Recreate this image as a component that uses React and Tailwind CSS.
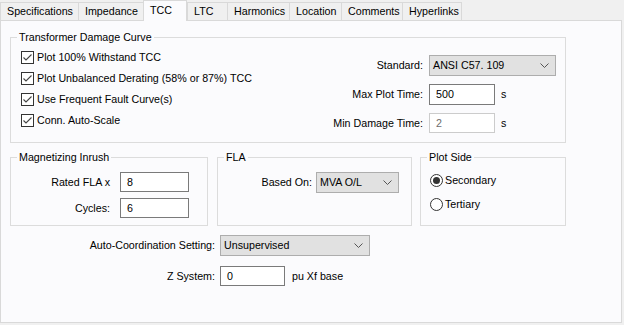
import React from "react";

const tabs = [
  { label: "Specifications", w: "w-[78px]" },
  { label: "Impedance", w: "w-[65px]" },
  { label: "TCC", w: "w-[44px]", active: true },
  { label: "LTC", w: "w-[40px]" },
  { label: "Harmonics", w: "w-[62px]" },
  { label: "Location", w: "w-[52px]" },
  { label: "Comments", w: "w-[61px]" },
  { label: "Hyperlinks", w: "w-[60px]", last: true },
];

const checks = [
  "Plot 100% Withstand TCC",
  "Plot Unbalanced Derating (58% or 87%) TCC",
  "Use Frequent Fault Curve(s)",
  "Conn. Auto-Scale",
];

function Checkbox() {
  return (
    <svg width="13" height="13" viewBox="0 0 13 13" className="shrink-0">
      <rect x="0.5" y="0.5" width="12" height="12" fill="#fff" stroke="#333" />
      <path d="M2.5 6.5 L5 9 L10.5 3.5" fill="none" stroke="#444" strokeWidth="1.1" />
    </svg>
  );
}

function Radio({ checked }) {
  return (
    <svg width="13" height="13" viewBox="0 0 13 13" className="shrink-0">
      <circle cx="6.5" cy="6.5" r="6" fill="#fff" stroke="#333" />
      {checked && <circle cx="6.5" cy="6.5" r="3.5" fill="#333" />}
    </svg>
  );
}

function Select({ value, w }) {
  return (
    <div className={`${w} h-[21px] flex items-center justify-between bg-[#e1e1e1] border border-[#adadad] pl-[3px] pr-[6px]`}>
      <span>{value}</span>
      <svg width="9" height="5" viewBox="0 0 9 5">
        <path d="M0.5 0.5 L4.5 4.5 L8.5 0.5" fill="none" stroke="#555" strokeWidth="1" />
      </svg>
    </div>
  );
}

function Input({ value, w, h = "h-[20px]", disabled }) {
  return (
    <div
      className={`${w} ${h} flex items-center pl-[6px] bg-white border ${
        disabled ? "border-[#cccccc] text-[#6d6d6d]" : "border-[#7a7a7a]"
      }`}
    >
      {value}
    </div>
  );
}

function GroupBox({ title, className, children }) {
  return (
    <fieldset className={`border border-[#dcdcdc] ${className}`}>
      <legend className="ml-[6px] px-[2px] leading-[13px]">{title}</legend>
      {children}
    </fieldset>
  );
}

export default function App() {
  return (
    <div className="w-[624px] h-[325px] bg-[#f0f0f0] font-['Liberation_Sans',Arial,sans-serif] text-[10.7px] leading-[13px] text-black whitespace-nowrap">
      <div className="flex items-end h-[20px]">
        {tabs.map((t) =>
          t.active ? (
            <div
              key={t.label}
              className={`${t.w} h-[21px] -mb-px relative z-10 bg-[#fbfbfd] border border-b-0 border-[#d9d9d9] pl-[6px] pt-[3px]`}
            >
              {t.label}
            </div>
          ) : (
            <div
              key={t.label}
              className={`${t.w} h-[18px] flex items-center pl-[6px] border-t border-l border-[#d9d9d9] ${t.last ? "border-r" : ""}`}
            >
              {t.label}
            </div>
          )
        )}
      </div>

      <div className="w-[622px] h-[303px] border border-[#d9d9d9] bg-[#fbfbfd] pt-[10px] pl-[9px]">
        <GroupBox title="Transformer Damage Curve" className="w-[556px] h-[112px]">
          <div className="flex justify-between pl-[10px] pr-[9px] pt-[3px]">
            <div className="flex flex-col">
              {checks.map((c) => (
                <div key={c} className="h-[21px] flex items-center gap-[3px]">
                  <Checkbox />
                  <span>{c}</span>
                </div>
              ))}
            </div>
            <div className="mt-[8px] grid grid-cols-[auto_auto] gap-x-[6px] gap-y-[8px] items-center self-start">
              <span className="text-right">Standard:</span>
              <Select value="ANSI C57. 109" w="w-[127px]" />
              <span className="text-right">Max Plot Time:</span>
              <div className="flex items-center">
                <Input value="500" w="w-[66px]" h="h-[21px]" />
                <span className="ml-[6px]">s</span>
              </div>
              <span className="text-right">Min Damage Time:</span>
              <div className="flex items-center">
                <Input value="2" w="w-[66px]" disabled />
                <span className="ml-[6px]">s</span>
              </div>
            </div>
          </div>
        </GroupBox>

        <div className="flex mt-[8px]">
          <GroupBox title="Magnetizing Inrush" className="w-[198px] h-[75px]">
            <div className="grid grid-cols-[99px_69px] gap-x-[10px] gap-y-[6px] items-center pt-[8px]">
              <span className="text-right">Rated FLA x</span>
              <Input value="8" w="w-[69px]" />
              <span className="text-right">Cycles:</span>
              <Input value="6" w="w-[69px]" />
            </div>
          </GroupBox>

          <GroupBox title="FLA" className="w-[195px] h-[75px] ml-[9px]">
            <div className="flex items-center pt-[8px]">
              <span className="w-[94px] text-right">Based On:</span>
              <div className="ml-[4px]">
                <Select value="MVA O/L" w="w-[83px]" />
              </div>
            </div>
          </GroupBox>

          <GroupBox title="Plot Side" className="w-[146px] h-[75px] ml-[8px]">
            <div className="flex flex-col pl-[9px] pt-[4px]">
              <div className="h-[24px] flex items-center gap-[2px]">
                <Radio checked />
                <span>Secondary</span>
              </div>
              <div className="h-[24px] flex items-center gap-[2px]">
                <Radio />
                <span>Tertiary</span>
              </div>
            </div>
          </GroupBox>
        </div>

        <div className="flex items-center mt-[9px]">
          <span className="w-[205px] text-right">Auto-Coordination Setting:</span>
          <div className="ml-[5px]">
            <Select value="Unsupervised" w="w-[150px]" />
          </div>
        </div>
        <div className="flex items-center mt-[10px]">
          <span className="w-[205px] text-right">Z System:</span>
          <div className="ml-[5px]">
            <Input value="0" w="w-[65px]" />
          </div>
          <span className="ml-[7px]">pu Xf base</span>
        </div>
      </div>
    </div>
  );
}
